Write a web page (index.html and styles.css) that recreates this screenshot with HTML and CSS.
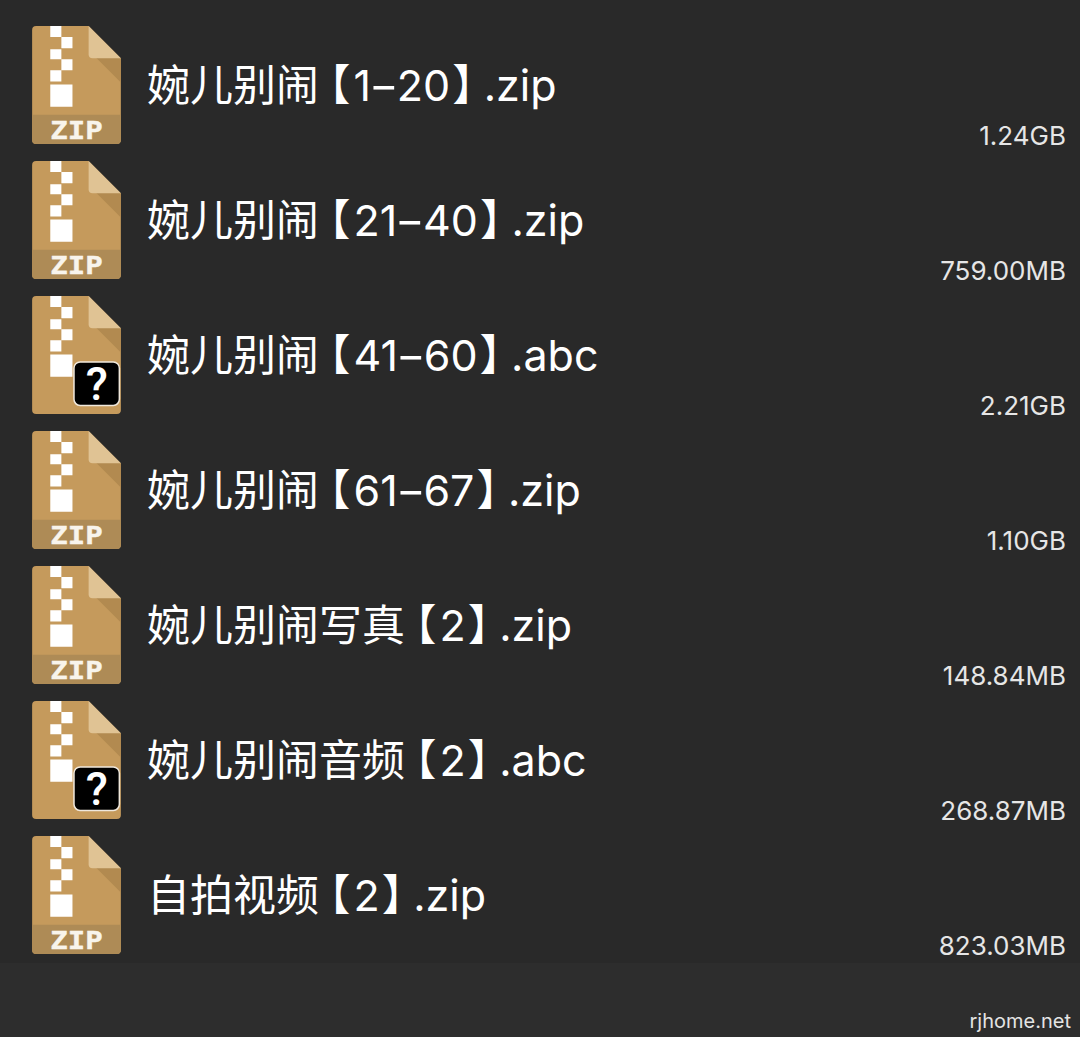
FILE: index.html
```html
<!DOCTYPE html>
<html lang="zh">
<head>
<meta charset="utf-8">
<title>Files</title>
<link rel="stylesheet" href="styles.css">
</head>
<body>
<main class="page">
<ul class="list">
<li class="row">
<svg class="icon" viewBox="0 0 88 118"><path class="body" d="M4 0H56L88 32V113a4 4 0 0 1-4 4H4a4 4 0 0 1-4-4V4a4 4 0 0 1 4-4Z"/><path class="shade" d="M56 30H62L88 56V32Z"/><path class="fold" d="M56 0L88 32H60a4 4 0 0 1-4-4Z"/><path class="band" d="M0 88H88V113a4 4 0 0 1-4 4H4a4 4 0 0 1-4-4Z"/><path class="zipper" d="M18 0H29V11H18ZM29 11H40V22H29ZM18 23H29V33H18ZM29 33H40V44H29ZM18 44H29V55H18ZM18 58H40V80H18Z"/><text class="ziplabel" x="18" y="112" textLength="52" lengthAdjust="spacingAndGlyphs">ZIP</text></svg>
<div class="info"><div class="name">婉儿别闹<span class="lb">【</span>1<span class="dash">-</span>20<span class="rb">】</span>.zip</div><div class="size">1.24GB</div></div>
</li>
<li class="row">
<svg class="icon" viewBox="0 0 88 118"><path class="body" d="M4 0H56L88 32V113a4 4 0 0 1-4 4H4a4 4 0 0 1-4-4V4a4 4 0 0 1 4-4Z"/><path class="shade" d="M56 30H62L88 56V32Z"/><path class="fold" d="M56 0L88 32H60a4 4 0 0 1-4-4Z"/><path class="band" d="M0 88H88V113a4 4 0 0 1-4 4H4a4 4 0 0 1-4-4Z"/><path class="zipper" d="M18 0H29V11H18ZM29 11H40V22H29ZM18 23H29V33H18ZM29 33H40V44H29ZM18 44H29V55H18ZM18 58H40V80H18Z"/><text class="ziplabel" x="18" y="112" textLength="52" lengthAdjust="spacingAndGlyphs">ZIP</text></svg>
<div class="info"><div class="name">婉儿别闹<span class="lb">【</span>21<span class="dash">-</span>40<span class="rb">】</span>.zip</div><div class="size">759.00MB</div></div>
</li>
<li class="row">
<svg class="icon" viewBox="0 0 88 118"><path class="body" d="M4 0H56L88 32V113a4 4 0 0 1-4 4H4a4 4 0 0 1-4-4V4a4 4 0 0 1 4-4Z"/><path class="shade" d="M56 30H62L88 56V32Z"/><path class="fold" d="M56 0L88 32H60a4 4 0 0 1-4-4Z"/><path class="zipper" d="M18 0H29V11H18ZM29 11H40V22H29ZM18 23H29V33H18ZM29 33H40V44H29ZM18 44H29V55H18ZM18 58H40V80H18Z"/><rect class="badge" x="41.5" y="65.5" width="45" height="43" rx="6"/><text class="mark" x="64" y="103">?</text></svg>
<div class="info"><div class="name">婉儿别闹<span class="lb">【</span>41<span class="dash">-</span>60<span class="rb">】</span>.abc</div><div class="size">2.21GB</div></div>
</li>
<li class="row">
<svg class="icon" viewBox="0 0 88 118"><path class="body" d="M4 0H56L88 32V113a4 4 0 0 1-4 4H4a4 4 0 0 1-4-4V4a4 4 0 0 1 4-4Z"/><path class="shade" d="M56 30H62L88 56V32Z"/><path class="fold" d="M56 0L88 32H60a4 4 0 0 1-4-4Z"/><path class="band" d="M0 88H88V113a4 4 0 0 1-4 4H4a4 4 0 0 1-4-4Z"/><path class="zipper" d="M18 0H29V11H18ZM29 11H40V22H29ZM18 23H29V33H18ZM29 33H40V44H29ZM18 44H29V55H18ZM18 58H40V80H18Z"/><text class="ziplabel" x="18" y="112" textLength="52" lengthAdjust="spacingAndGlyphs">ZIP</text></svg>
<div class="info"><div class="name">婉儿别闹<span class="lb">【</span>61<span class="dash">-</span>67<span class="rb">】</span>.zip</div><div class="size">1.10GB</div></div>
</li>
<li class="row">
<svg class="icon" viewBox="0 0 88 118"><path class="body" d="M4 0H56L88 32V113a4 4 0 0 1-4 4H4a4 4 0 0 1-4-4V4a4 4 0 0 1 4-4Z"/><path class="shade" d="M56 30H62L88 56V32Z"/><path class="fold" d="M56 0L88 32H60a4 4 0 0 1-4-4Z"/><path class="band" d="M0 88H88V113a4 4 0 0 1-4 4H4a4 4 0 0 1-4-4Z"/><path class="zipper" d="M18 0H29V11H18ZM29 11H40V22H29ZM18 23H29V33H18ZM29 33H40V44H29ZM18 44H29V55H18ZM18 58H40V80H18Z"/><text class="ziplabel" x="18" y="112" textLength="52" lengthAdjust="spacingAndGlyphs">ZIP</text></svg>
<div class="info"><div class="name">婉儿别闹写真<span class="lb">【</span>2<span class="rb">】</span>.zip</div><div class="size">148.84MB</div></div>
</li>
<li class="row">
<svg class="icon" viewBox="0 0 88 118"><path class="body" d="M4 0H56L88 32V113a4 4 0 0 1-4 4H4a4 4 0 0 1-4-4V4a4 4 0 0 1 4-4Z"/><path class="shade" d="M56 30H62L88 56V32Z"/><path class="fold" d="M56 0L88 32H60a4 4 0 0 1-4-4Z"/><path class="zipper" d="M18 0H29V11H18ZM29 11H40V22H29ZM18 23H29V33H18ZM29 33H40V44H29ZM18 44H29V55H18ZM18 58H40V80H18Z"/><rect class="badge" x="41.5" y="65.5" width="45" height="43" rx="6"/><text class="mark" x="64" y="103">?</text></svg>
<div class="info"><div class="name">婉儿别闹音频<span class="lb">【</span>2<span class="rb">】</span>.abc</div><div class="size">268.87MB</div></div>
</li>
<li class="row">
<svg class="icon" viewBox="0 0 88 118"><path class="body" d="M4 0H56L88 32V113a4 4 0 0 1-4 4H4a4 4 0 0 1-4-4V4a4 4 0 0 1 4-4Z"/><path class="shade" d="M56 30H62L88 56V32Z"/><path class="fold" d="M56 0L88 32H60a4 4 0 0 1-4-4Z"/><path class="band" d="M0 88H88V113a4 4 0 0 1-4 4H4a4 4 0 0 1-4-4Z"/><path class="zipper" d="M18 0H29V11H18ZM29 11H40V22H29ZM18 23H29V33H18ZM29 33H40V44H29ZM18 44H29V55H18ZM18 58H40V80H18Z"/><text class="ziplabel" x="18" y="112" textLength="52" lengthAdjust="spacingAndGlyphs">ZIP</text></svg>
<div class="info"><div class="name">自拍视频<span class="lb">【</span>2<span class="rb">】</span>.zip</div><div class="size">823.03MB</div></div>
</li>
</ul>
<footer class="footer"><span class="site">rjhome.net</span></footer>
</main>
</body>
</html>
```
FILE: styles.css
```css
* { box-sizing: border-box; }
html, body { margin: 0; height: 100%; }
body {
  background: #2d2d2d;
  font-family: Inter, "Noto Sans CJK SC", sans-serif;
  overflow: hidden;
}
.page { display: flex; flex-direction: column; height: 1037px; }
.list {
  list-style: none;
  margin: 0;
  padding: 26px 0 0;
  height: 963px;
  background: #292929;
}
.row {
  display: flex;
  height: 135px;
  padding: 0 14px 0 32px;
  gap: 26px;
}
.icon { width: 89px; height: 119px; flex: none; }
.body { fill: #c59a5c; }
.shade { fill: #b28a50; }
.fold { fill: #e0c394; }
.band { fill: #ae8b56; }
.zipper { fill: #ffffff; }
.ziplabel {
  font-family: "DejaVu Sans Mono", monospace;
  font-weight: 700;
  font-size: 25px;
  fill: #f8f4ec;
  stroke: #f8f4ec;
  stroke-width: 0.4;
}
.badge { fill: #000000; stroke: #f0e8dc; stroke-width: 1.5; }
.mark {
  font-family: Roboto, sans-serif;
  font-weight: 500;
  font-size: 45px;
  text-anchor: middle;
  fill: #ffffff;
}
.info { flex: 1; min-width: 0; display: flex; flex-direction: column; }
.name {
  color: #ffffff;
  font-size: 43px;
  line-height: 60px;
  margin-top: 29px;
  white-space: nowrap;
}
.lb { font-feature-settings: "halt"; margin: 0 3px 0 10px; }
.rb { font-feature-settings: "halt"; margin: 0 10px 0 2px; }
.dash { display: inline-block; transform: scaleX(1.5); margin: 0 3px; }
.size {
  color: #e6e6e6;
  font-size: 26px;
  line-height: 32px;
  margin-top: 5px;
  text-align: right;
}
.footer {
  flex: 1;
  display: flex;
  justify-content: flex-end;
  align-items: flex-end;
  padding: 0 9px 3px 0;
}
.site { color: #e4e4e4; font-size: 20px; line-height: 26px; }
```
